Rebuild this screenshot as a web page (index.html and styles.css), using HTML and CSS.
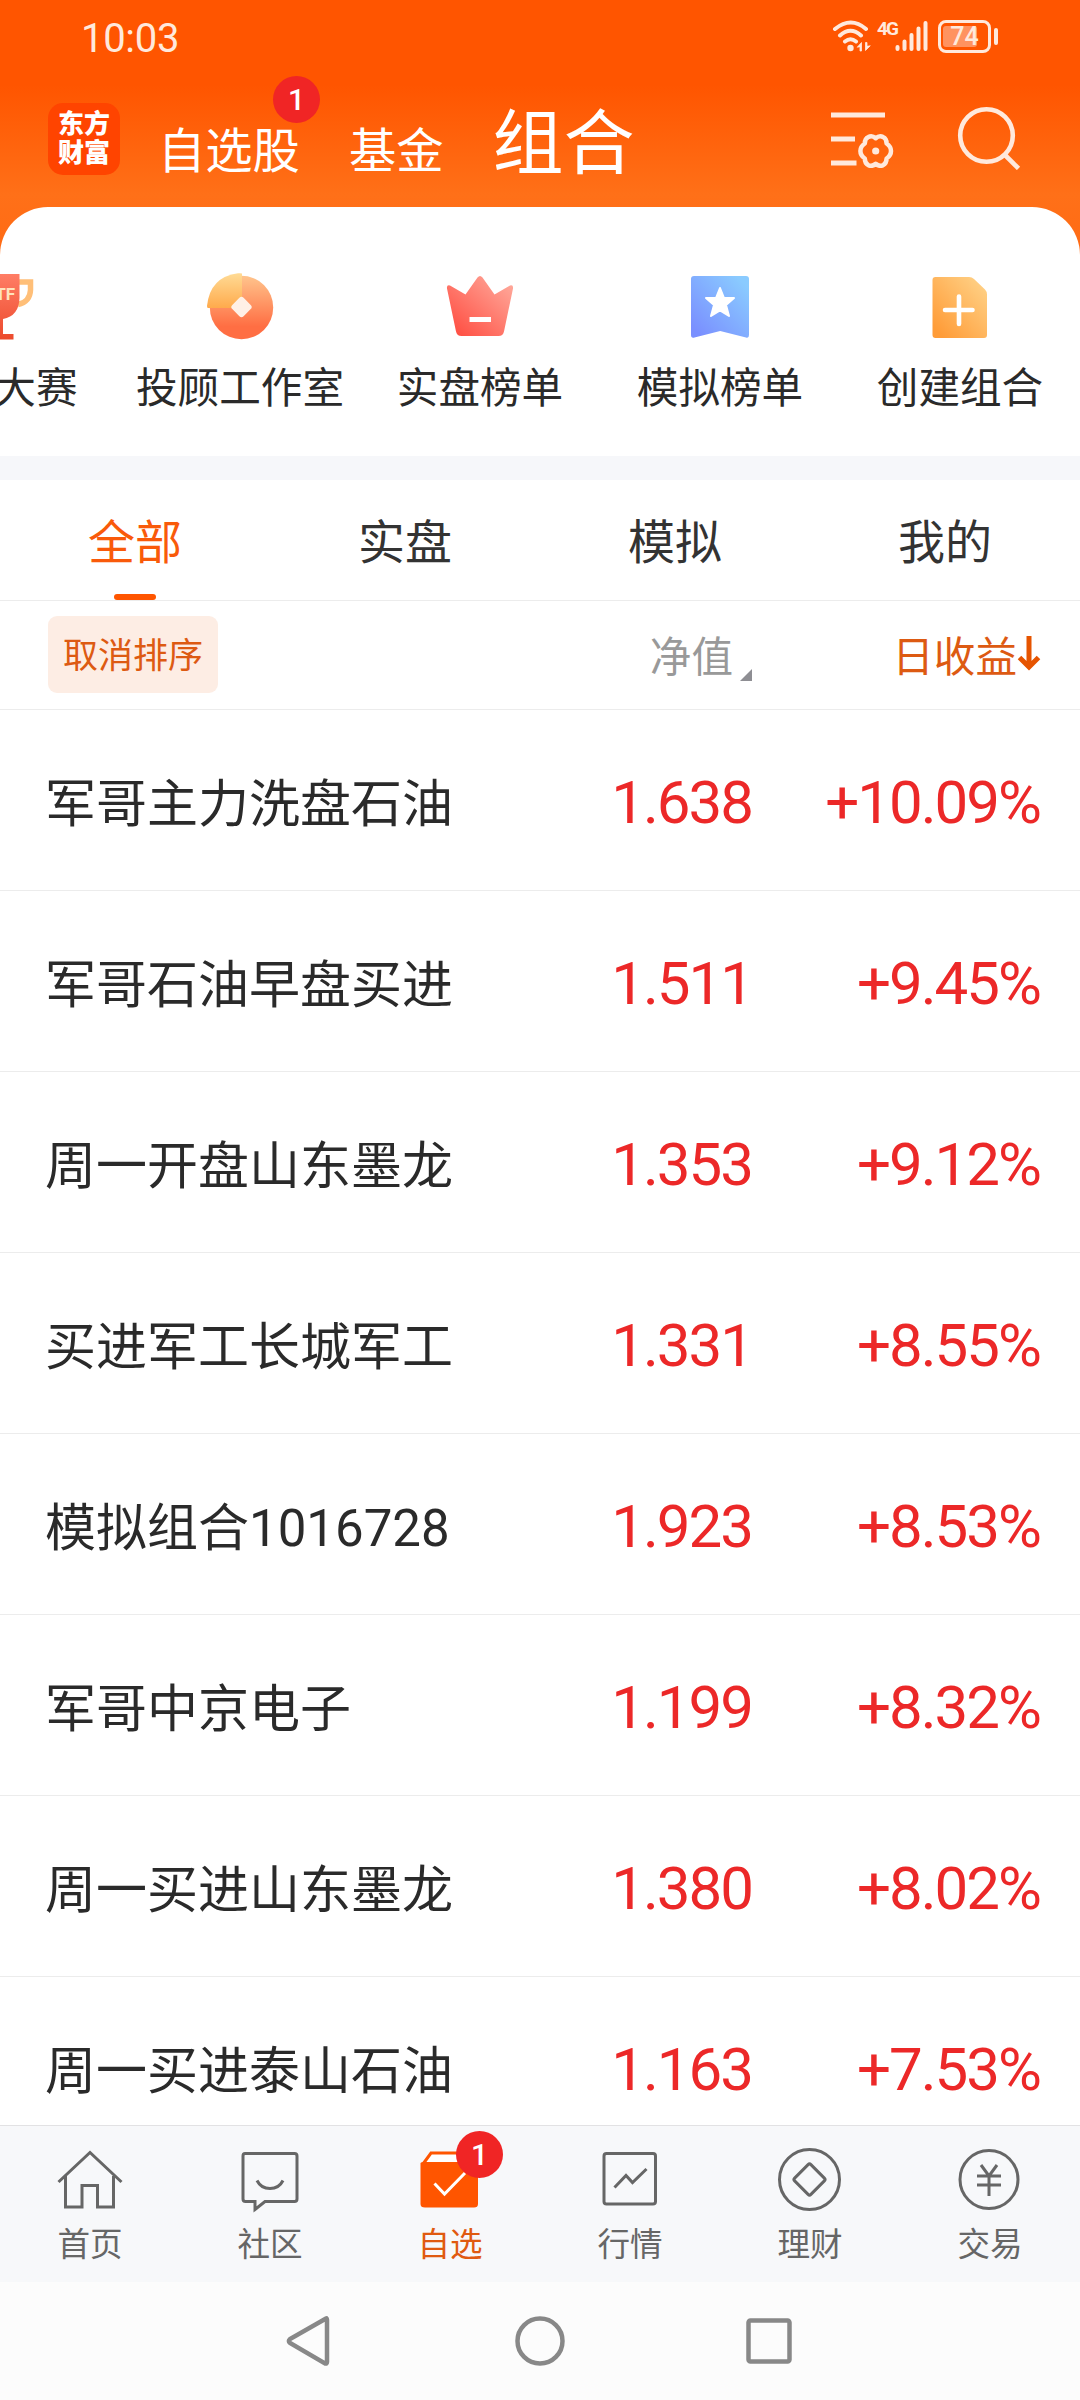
FILE: index.html
```html
<!DOCTYPE html>
<html lang="zh-CN">
<head>
  <title>组合</title>
  <meta charset="UTF-8">
  <meta name="viewport" content="width=device-width, initial-scale=1.0">
  <link rel="stylesheet" href="styles.css">
</head>
<body>
  <div class="app">
    <div class="status-bar">
      <span class="time">10:03</span>
      <div class="status-icons">
        <svg class="wifi" width="40" height="34" viewBox="0 0 40 34" fill="none" stroke="#ffe9dc" stroke-linecap="round">
          <path d="M3 10Q19 -3 34 10M8 16.500Q18.500 7 29 16.500M13 22.500Q18.500 18 24 22.500" stroke-width="4"/>
          <circle cx="18.500" cy="29" r="3.200" fill="#ffe9dc" stroke="none"/>
          <path d="M25.500 28L29.500 23.500V32H28V28ZM38 27L33.500 31.500V23.500H35V27Z" fill="#ffe9dc" stroke="#ffe9dc" stroke-width=".8"/>
        </svg>
        <span class="net">4G</span>
        <svg class="signal" width="34" height="34" viewBox="0 0 34 34" stroke="#ffe9dc" stroke-width="4" stroke-linecap="round">
          <path d="M2.500 28V30M9.500 22.500V30M16.500 16V30M23.500 9.500V30M30.500 4V30"/>
        </svg>
        <div class="battery"><span class="level"></span><span class="percent">74</span></div>
        <span class="battery-tip"></span>
      </div>
    </div>

    <div class="header">
      <div class="logo">东方<br>财富</div>
      <div class="nav">
        <span class="nav-item">自选股<span class="badge">1</span></span>
        <span class="nav-item">基金</span>
        <span class="nav-item current">组合</span>
      </div>
      <svg class="filter-icon" width="64" height="64" viewBox="0 0 64 64" fill="none" stroke="#ffe9dc" stroke-width="5">
        <path d="M1 11H55M1 35H25M1 59H26.500"/>
        <path stroke-width="4.500" stroke-linejoin="round" d="M45.700 34.200Q49.500 31 53 33Q56.600 34.500 56.600 39.500Q61 42.500 61 47Q61 51.500 56.600 54.500Q56.600 59.500 53 61.200Q49.500 63 45.700 59.800Q42 63 38.400 61.200Q34.800 59.500 34.800 54.500Q30.400 51.500 30.400 47Q30.400 42.500 34.800 39.500Q34.800 34.500 38.400 33Q42 31 45.700 34.200Z"/>
        <circle cx="45.700" cy="47" r="3.600" fill="#ffe9dc" stroke="none"/>
      </svg>
      <svg class="search-icon" width="64" height="64" viewBox="0 0 64 64" fill="none" stroke="#ffe9dc" stroke-width="4.600">
        <circle cx="29.500" cy="29.500" r="26.300"/>
        <path d="M47.500 48.500L61.500 62.500"/>
      </svg>
    </div>

    <div class="panel">
      <div class="shortcuts">
        <div class="shortcut">
          <svg width="72" height="72" viewBox="0 0 72 72">
            <defs><linearGradient id="cup" x1="0" y1="0" x2="0" y2="1"><stop offset="0" stop-color="#ff7d65"/><stop offset="1" stop-color="#ec4a2c"/></linearGradient></defs>
            <path d="M54 14H66.500V22Q66 34 54 36.500" fill="none" stroke="#ffbf78" stroke-width="5.500"/>
            <path d="M17 6H55.500V30Q55 48 39 51V66H49.500V71.500H22V66H32V51Q17 48 17 30Z" fill="url(#cup)"/>
            <text x="21.500" y="31.500" class="cup-text">ETF</text>
          </svg>
          <span>ETF大赛</span>
        </div>
        <div class="shortcut">
          <svg width="72" height="72" viewBox="0 0 72 72">
            <defs>
              <linearGradient id="coin" x1="0" y1="0" x2="0" y2="1"><stop offset="0" stop-color="#ffc48c"/><stop offset=".8" stop-color="#ff6e43"/></linearGradient>
              <linearGradient id="slice" x1="0" y1="0" x2="0" y2="1"><stop offset="0" stop-color="#ffdb95"/><stop offset="1" stop-color="#ffaa4c"/></linearGradient>
            </defs>
            <circle cx="37.500" cy="39.500" r="31.700" fill="url(#coin)"/>
            <path d="M38 40V5.500Q37 5 34 5.300Q6 9 3 38Q3 40 4 40Z" fill="url(#slice)"/>
            <rect x="29.500" y="31" width="16" height="16" rx="3" fill="#fff0e6" transform="rotate(45 37.500 39)"/>
          </svg>
          <span>投顾工作室</span>
        </div>
        <div class="shortcut">
          <svg width="72" height="72" viewBox="0 0 72 72">
            <defs><linearGradient id="crown" x1="0" y1="1" x2="1" y2="0"><stop offset=".1" stop-color="#ff5145"/><stop offset=".9" stop-color="#ffa597"/></linearGradient></defs>
            <path d="M6 17.500L21.500 26.500L33.500 9.500Q36 6.500 38.500 9.500L50.500 26.500L66 17.500Q69.500 16.500 69 20.500L60 63.500Q59 68 54.500 68H17.500Q13 68 12 63.500L3 20.500Q2.500 16.500 6 17.500Z" fill="url(#crown)"/>
            <path d="M25.500 51.500H47" stroke="#fff" stroke-width="5"/>
          </svg>
          <span>实盘榜单</span>
        </div>
        <div class="shortcut">
          <svg width="72" height="72" viewBox="0 0 72 72">
            <defs><linearGradient id="mark" x1="0" y1="1" x2="1" y2="0"><stop offset=".1" stop-color="#7a90ff"/><stop offset=".9" stop-color="#8acbff"/></linearGradient></defs>
            <path d="M10 8H62Q65 8 65 11V67Q65 70.500 62 69.500L36.200 63L10.500 69.500Q7 70.500 7 67V11Q7 8 10 8Z" fill="url(#mark)"/>
            <path d="M36 20L40 30H50L42 37L45 48L36 42.500L27 48L30 37L22 30H32Z" fill="#fff" stroke="#fff" stroke-width="2" stroke-linejoin="round"/>
          </svg>
          <span>模拟榜单</span>
        </div>
        <div class="shortcut">
          <svg width="72" height="72" viewBox="0 0 72 72">
            <defs><linearGradient id="doc" x1="0" y1="1" x2="1" y2="0"><stop offset=".1" stop-color="#ff9c38"/><stop offset=".9" stop-color="#ffcf83"/></linearGradient></defs>
            <path d="M11.500 9H45Q48 9 50 11L61 21.500Q63 23.500 63 26.500V67Q63 70 60 70H11.500Q8.500 70 8.500 67V12Q8.500 9 11.500 9Z" fill="url(#doc)"/>
            <path d="M21 42H48.500M35 28.500V56" stroke="#fff" stroke-width="4.600" stroke-linecap="round"/>
          </svg>
          <span>创建组合</span>
        </div>
      </div>
    </div>

    <div class="tabs">
      <div class="tab active">全部</div>
      <div class="tab">实盘</div>
      <div class="tab">模拟</div>
      <div class="tab">我的</div>
    </div>

    <div class="sort-row">
      <div class="sort-cancel">取消排序</div>
      <div class="sort-value">净值<svg width="12" height="12" viewBox="0 0 12 12"><path d="M12 0V12H0Z" fill="#8e8e93"/></svg></div>
      <div class="sort-profit">日收益<svg width="24" height="36" viewBox="0 0 24 36" fill="none" stroke="#e65400" stroke-width="5"><path d="M12 0V31M2.500 21.500L12 31L21.500 21.500"/></svg></div>
    </div>

    <div class="list">
      <div class="row"><span class="name">军哥主力洗盘石油</span><span class="value">1.638</span><span class="profit">+10.09%</span></div>
      <div class="row"><span class="name">军哥石油早盘买进</span><span class="value">1.511</span><span class="profit">+9.45%</span></div>
      <div class="row"><span class="name">周一开盘山东墨龙</span><span class="value">1.353</span><span class="profit">+9.12%</span></div>
      <div class="row"><span class="name">买进军工长城军工</span><span class="value">1.331</span><span class="profit">+8.55%</span></div>
      <div class="row"><span class="name">模拟组合1016728</span><span class="value">1.923</span><span class="profit">+8.53%</span></div>
      <div class="row"><span class="name">军哥中京电子</span><span class="value">1.199</span><span class="profit">+8.32%</span></div>
      <div class="row"><span class="name">周一买进山东墨龙</span><span class="value">1.380</span><span class="profit">+8.02%</span></div>
      <div class="row"><span class="name">周一买进泰山石油</span><span class="value">1.163</span><span class="profit">+7.53%</span></div>
    </div>

    <div class="tab-bar">
      <div class="bar-item">
        <svg width="72" height="72" viewBox="0 0 72 72"><path d="M4.500 38L36 8.500L67.500 38M11.500 32V63H28V41.500H43.500V63H59.500V32"/></svg>
        <span>首页</span>
      </div>
      <div class="bar-item">
        <svg width="72" height="72" viewBox="0 0 72 72"><path d="M11 9.500H60.500Q63 9.500 63 12V55Q63 57.500 60.500 57.500H31L21 65.500V57.500H11.500Q9 57.500 9 55V12Q9 9.500 11 9.500Z"/><path d="M23 36.500Q27 44.500 36 44.500Q45 44.500 49 36.500"/></svg>
        <span>社区</span>
      </div>
      <div class="bar-item selected">
        <div class="icon-wrap">
          <svg width="72" height="72" viewBox="0 0 72 72">
            <path d="M9 20L17 9H58L64 18V20" fill="#fff"/>
            <path d="M6.500 19Q7 18 10 18H62Q64 18 64 22V60Q64 63.500 60 63.500H11Q6.500 63.500 6.500 60Z" fill="#ff5500" stroke="none"/>
            <path d="M20.500 39.500L30.500 50L51 29" stroke="#fff"/>
          </svg>
          <span class="badge">1</span>
        </div>
        <span>自选</span>
      </div>
      <div class="bar-item">
        <svg width="72" height="72" viewBox="0 0 72 72"><rect x="10" y="9.500" width="51.500" height="50.500" rx="2.500"/><path d="M20.500 43.500L32 31.500L38.500 38.500L52.500 25"/></svg>
        <span>行情</span>
      </div>
      <div class="bar-item">
        <svg width="72" height="72" viewBox="0 0 72 72"><circle cx="35.500" cy="35.500" r="30"/><rect x="24" y="24" width="23" height="23" rx="2" transform="rotate(45 35.500 35.500)"/></svg>
        <span>理财</span>
      </div>
      <div class="bar-item">
        <svg width="72" height="72" viewBox="0 0 72 72"><circle cx="35" cy="35.500" r="29"/><path d="M27 21L35 32L43 21M23 32H47M23 41H47M35 32V52"/></svg>
        <span>交易</span>
      </div>
    </div>

    <div class="system-nav">
      <svg width="60" height="60" viewBox="0 0 60 60"><path d="M46 7.500Q47 7 47 9V51Q47 53 45 52.500L10 32Q8 30 10 28Z"/></svg>
      <svg width="60" height="60" viewBox="0 0 60 60"><circle cx="30" cy="30" r="22.500"/></svg>
      <svg width="60" height="60" viewBox="0 0 60 60"><rect x="8.500" y="9.500" width="41" height="41" rx="2"/></svg>
    </div>
  </div>
</body>
</html>
```
FILE: styles.css
```css
body {
  margin: 0;
  font-family: Roboto, "Noto Sans CJK SC", sans-serif;
  color: #2a2a2a;
}
.app {
  display: flex;
  flex-direction: column;
  width: 1080px;
  height: 2400px;
  overflow: hidden;
  background: #fff linear-gradient(#ff5500 85px, #ff7018 195px, #ff6a14 260px) no-repeat 0 0 / 100% 260px;
}
svg {
  display: block;
  flex-shrink: 0;
}

/* barra de estado */
.status-bar {
  display: flex;
  justify-content: space-between;
  height: 74px;
  padding: 0 82px 0 81px;
  color: #ffe9dc;
}
.time {
  font-size: 40px;
  line-height: 77px;
  letter-spacing: -0.3px;
}
.status-icons {
  display: flex;
  align-items: flex-start;
  padding-top: 19px;
}
.net {
  width: 23px;
  margin-left: 5px;
  font-size: 19px;
  font-weight: bold;
  line-height: 19px;
  letter-spacing: -2px;
  margin-right: -5px;
}
.battery {
  display: flex;
  position: relative;
  justify-content: center;
  box-sizing: border-box;
  width: 53px;
  height: 33px;
  margin-left: 9px;
  margin-top: 1px;
  border: 3px solid #ffe9dc;
  border-radius: 8px;
}
.level {
  position: absolute;
  left: 2px;
  top: 3px;
  width: 34px;
  height: 21px;
  border-radius: 3px;
  background: #ff9360;
}
.percent {
  position: relative;
  font-size: 25px;
  font-weight: 500;
  line-height: 28px;
}
.battery-tip {
  width: 4px;
  height: 17px;
  margin: 9px 0 0 3px;
  border-radius: 2px;
  background: #ffe9dc;
}

/* cabecera */
.header {
  display: flex;
  height: 133px;
  padding: 0 59px 0 48px;
}
.logo {
  width: 72px;
  height: 72px;
  margin-top: 29px;
  padding-top: 7px;
  box-sizing: border-box;
  border-radius: 15px;
  background: #ff4400;
  color: #fff;
  font-size: 26px;
  font-weight: 900;
  line-height: 29px;
  text-align: center;
}
.nav {
  display: flex;
  align-items: baseline;
  gap: 49px;
  margin-left: 38px;
  color: #fff;
  font-size: 47.300px;
  line-height: 139px;
}
.nav-item {
  position: relative;
}
.nav-item.current {
  font-size: 71px;
}
.badge {
  position: absolute;
  width: 47px;
  height: 47px;
  border-radius: 50%;
  background: #f02525;
  color: #fff;
  font-size: 30px;
  font-weight: 500;
  line-height: 48px;
  text-align: center;
}
.nav-item .badge {
  left: 115px;
  top: -7px;
}
.filter-icon {
  margin: 30px 0 0 auto;
}
.search-icon {
  margin: 32px 0 0 63px;
}

/* accesos */
.panel {
  height: 249px;
  border-radius: 48px 48px 0 0;
  background: #fff;
  overflow: hidden;
}
.shortcuts {
  display: flex;
  margin-left: -120px;
  padding-top: 61px;
}
.shortcut {
  display: flex;
  flex-direction: column;
  align-items: center;
  flex: 0 0 240px;
  gap: 18px;
  font-size: 41.600px;
  line-height: 62px;
}
.cup-text {
  fill: #ffe3bd;
  font-size: 17px;
  font-weight: bold;
}

.tabs {
  display: flex;
  height: 120px;
  border-top: 24px solid #f6f7fa;
  border-bottom: 1px solid #ececec;
  background: #fff;
}
.tab {
  display: flex;
  position: relative;
  flex: 1;
  justify-content: center;
  font-size: 47px;
  line-height: 126px;
  color: #333;
}
.tab.active {
  color: #f95a0a;
}
.tab.active::after {
  content: "";
  position: absolute;
  bottom: 0;
  width: 42px;
  height: 6px;
  border-radius: 3px;
  background: #ff5500;
}

.sort-row {
  display: flex;
  align-items: center;
  height: 108px;
  padding: 0 39px 0 48px;
  border-bottom: 1px solid #ececec;
  background: #fff;
  font-size: 41.600px;
}
.sort-cancel {
  width: 170px;
  height: 77px;
  margin-bottom: 1px;
  border-radius: 9px;
  background: #fdede4;
  color: #dd5a12;
  font-size: 35px;
  line-height: 81px;
  text-align: center;
}
.sort-value {
  display: flex;
  align-items: flex-end;
  gap: 7px;
  margin-left: auto;
  margin-bottom: 2px;
  color: #999;
}
.sort-value svg {
  margin-bottom: 3px;
}
.sort-profit {
  display: flex;
  align-items: center;
  width: 289px;
  margin-bottom: 2px;
  justify-content: flex-end;
  color: #dd5a12;
}

/* lista */
.list {
  flex: 1;
  overflow: hidden;
  background: #fff;
}
.row {
  display: flex;
  align-items: center;
  height: 180px;
  padding: 0 40px 0 45px;
  border-bottom: 1px solid #ececec;
}
.name {
  flex: 1;
  font-size: 51px;
}
.value,
.profit {
  padding-top: 5px;
  color: #ec2828;
  font-size: 60px;
  letter-spacing: -2px;
}
.profit {
  width: 288px;
  text-align: right;
}

/* menu inferior */
.tab-bar {
  display: flex;
  height: 156px;
  border-top: 1px solid #e2e2e4;
  background: #f7f8fa;
}
.bar-item {
  display: flex;
  flex: 1;
  flex-direction: column;
  align-items: center;
  gap: 5px;
  padding-top: 18px;
  color: #666;
  font-size: 32.600px;
  line-height: 49px;
}
.bar-item svg {
  fill: none;
  stroke: #666;
  stroke-width: 3;
}
.bar-item.selected {
  color: #e05a10;
}
.bar-item.selected svg {
  stroke: #ff5500;
}
.icon-wrap {
  position: relative;
}
.icon-wrap .badge {
  left: 42px;
  top: -13px;
}

.system-nav {
  display: flex;
  justify-content: center;
  gap: 170px;
  height: 89px;
  padding-top: 29px;
  background: #fcfcfc;
}
.system-nav svg {
  fill: none;
  stroke: #888;
  stroke-width: 4.500;
}
```
